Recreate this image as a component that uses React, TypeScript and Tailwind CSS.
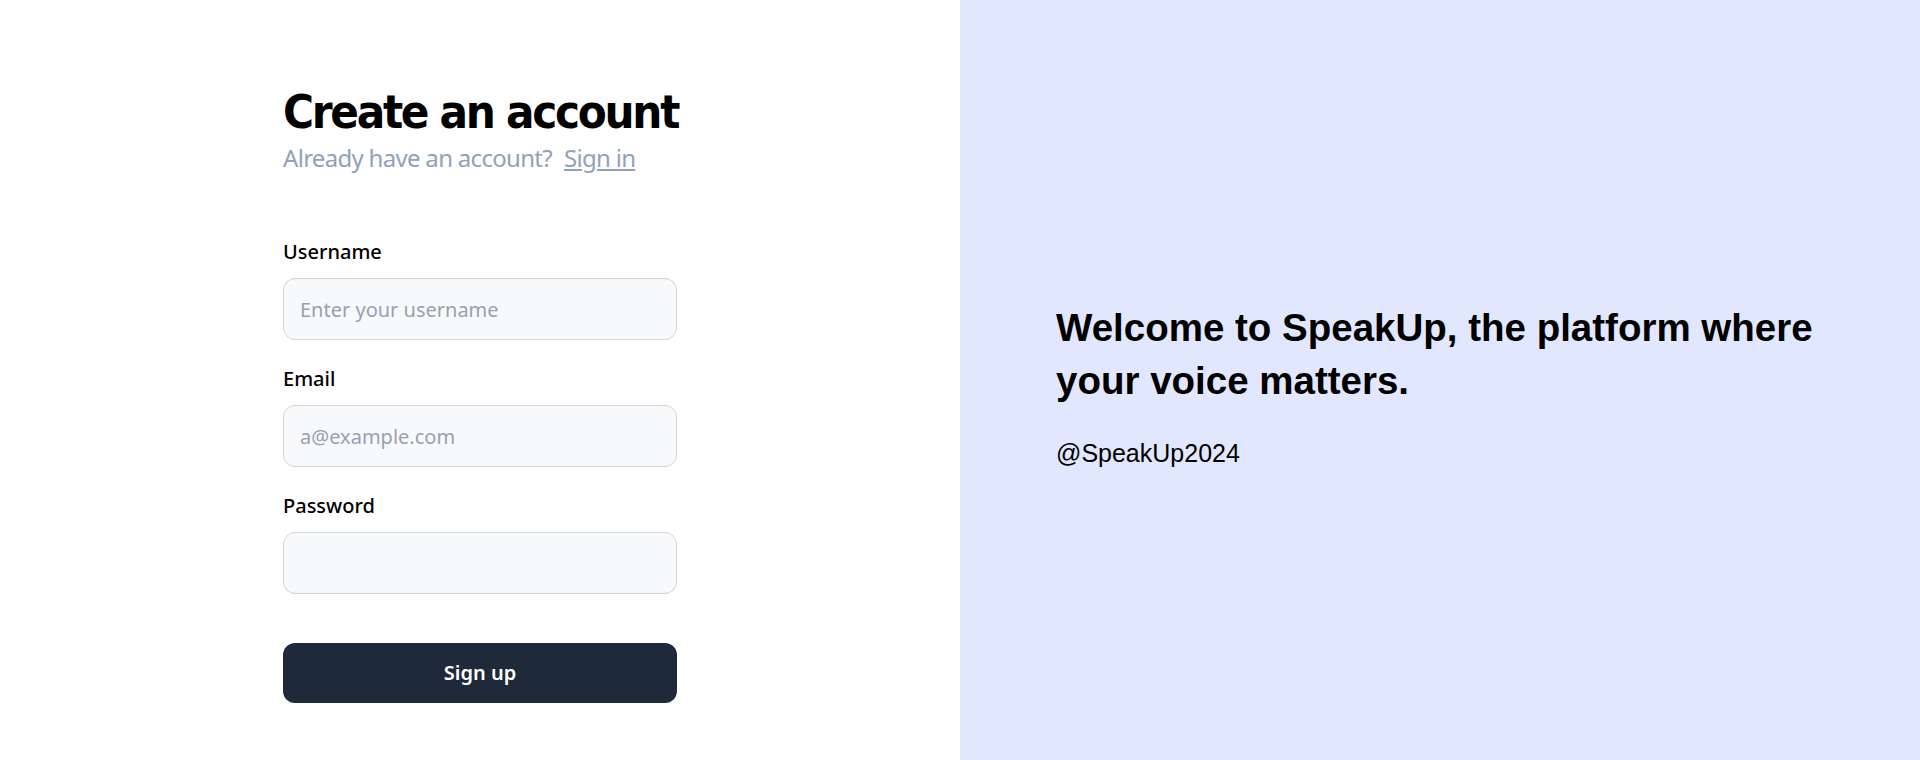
import { useState } from "react";

const display = {
  fontFamily: '"DejaVu Sans Condensed", "Liberation Sans", Arial, sans-serif',
  fontStretch: "condensed",
};
const body = { fontFamily: '"Noto Sans", "Open Sans", sans-serif' };
const plain = { fontFamily: '"Liberation Sans", Arial, sans-serif' };

function Field({
  label,
  type,
  placeholder,
}: {
  label: string;
  type: string;
  placeholder?: string;
}) {
  const [value, setValue] = useState("");
  return (
    <label className="flex flex-col">
      <span className="text-xl font-medium text-black">{label}</span>
      <input
        type={type}
        value={value}
        onChange={(e) => setValue(e.target.value)}
        placeholder={placeholder}
        className="mt-3 h-[62px] w-full rounded-xl border border-gray-300 bg-[#f8f9fb] px-4 text-xl text-gray-900 outline-none placeholder:text-gray-400"
      />
    </label>
  );
}

export default function App() {
  return (
    <div className="flex h-screen min-h-[760px] w-full" style={body}>
      {/* form side */}
      <div className="flex w-1/2 justify-center bg-white">
        <div className="w-[394px] pt-[85px]">
          <h1
            className="whitespace-nowrap text-[47px] font-bold leading-[53px] tracking-[-2.3px] text-black"
            style={display}
          >
            Create an account
          </h1>
          <p className="mt-[4px] text-2xl tracking-[-0.7px] text-slate-400">
            Already have an account?
            <a href="#" className="ml-3 underline underline-offset-2">
              Sign in
            </a>
          </p>

          <form className="mt-16 flex flex-col gap-[25px]" onSubmit={(e) => e.preventDefault()}>
            <Field label="Username" type="text" placeholder="Enter your username" />
            <Field label="Email" type="email" placeholder="a@example.com" />
            <Field label="Password" type="password" />
            <button
              type="submit"
              className="mt-6 h-[60px] w-full rounded-xl bg-gray-800 text-xl font-semibold text-white"
            >
              Sign up
            </button>
          </form>
        </div>
      </div>

      {/* welcome side */}
      <div className="flex w-1/2 flex-col justify-center bg-[#e0e7ff] px-24 pt-[9px]">
        <h2 className="text-[38.5px] font-bold leading-[53px] text-black" style={plain}>
          Welcome to SpeakUp, the platform where your voice matters.
        </h2>
        <p className="mt-[30px] text-[25px] leading-8 text-black" style={plain}>
          @SpeakUp2024
        </p>
      </div>
    </div>
  );
}
